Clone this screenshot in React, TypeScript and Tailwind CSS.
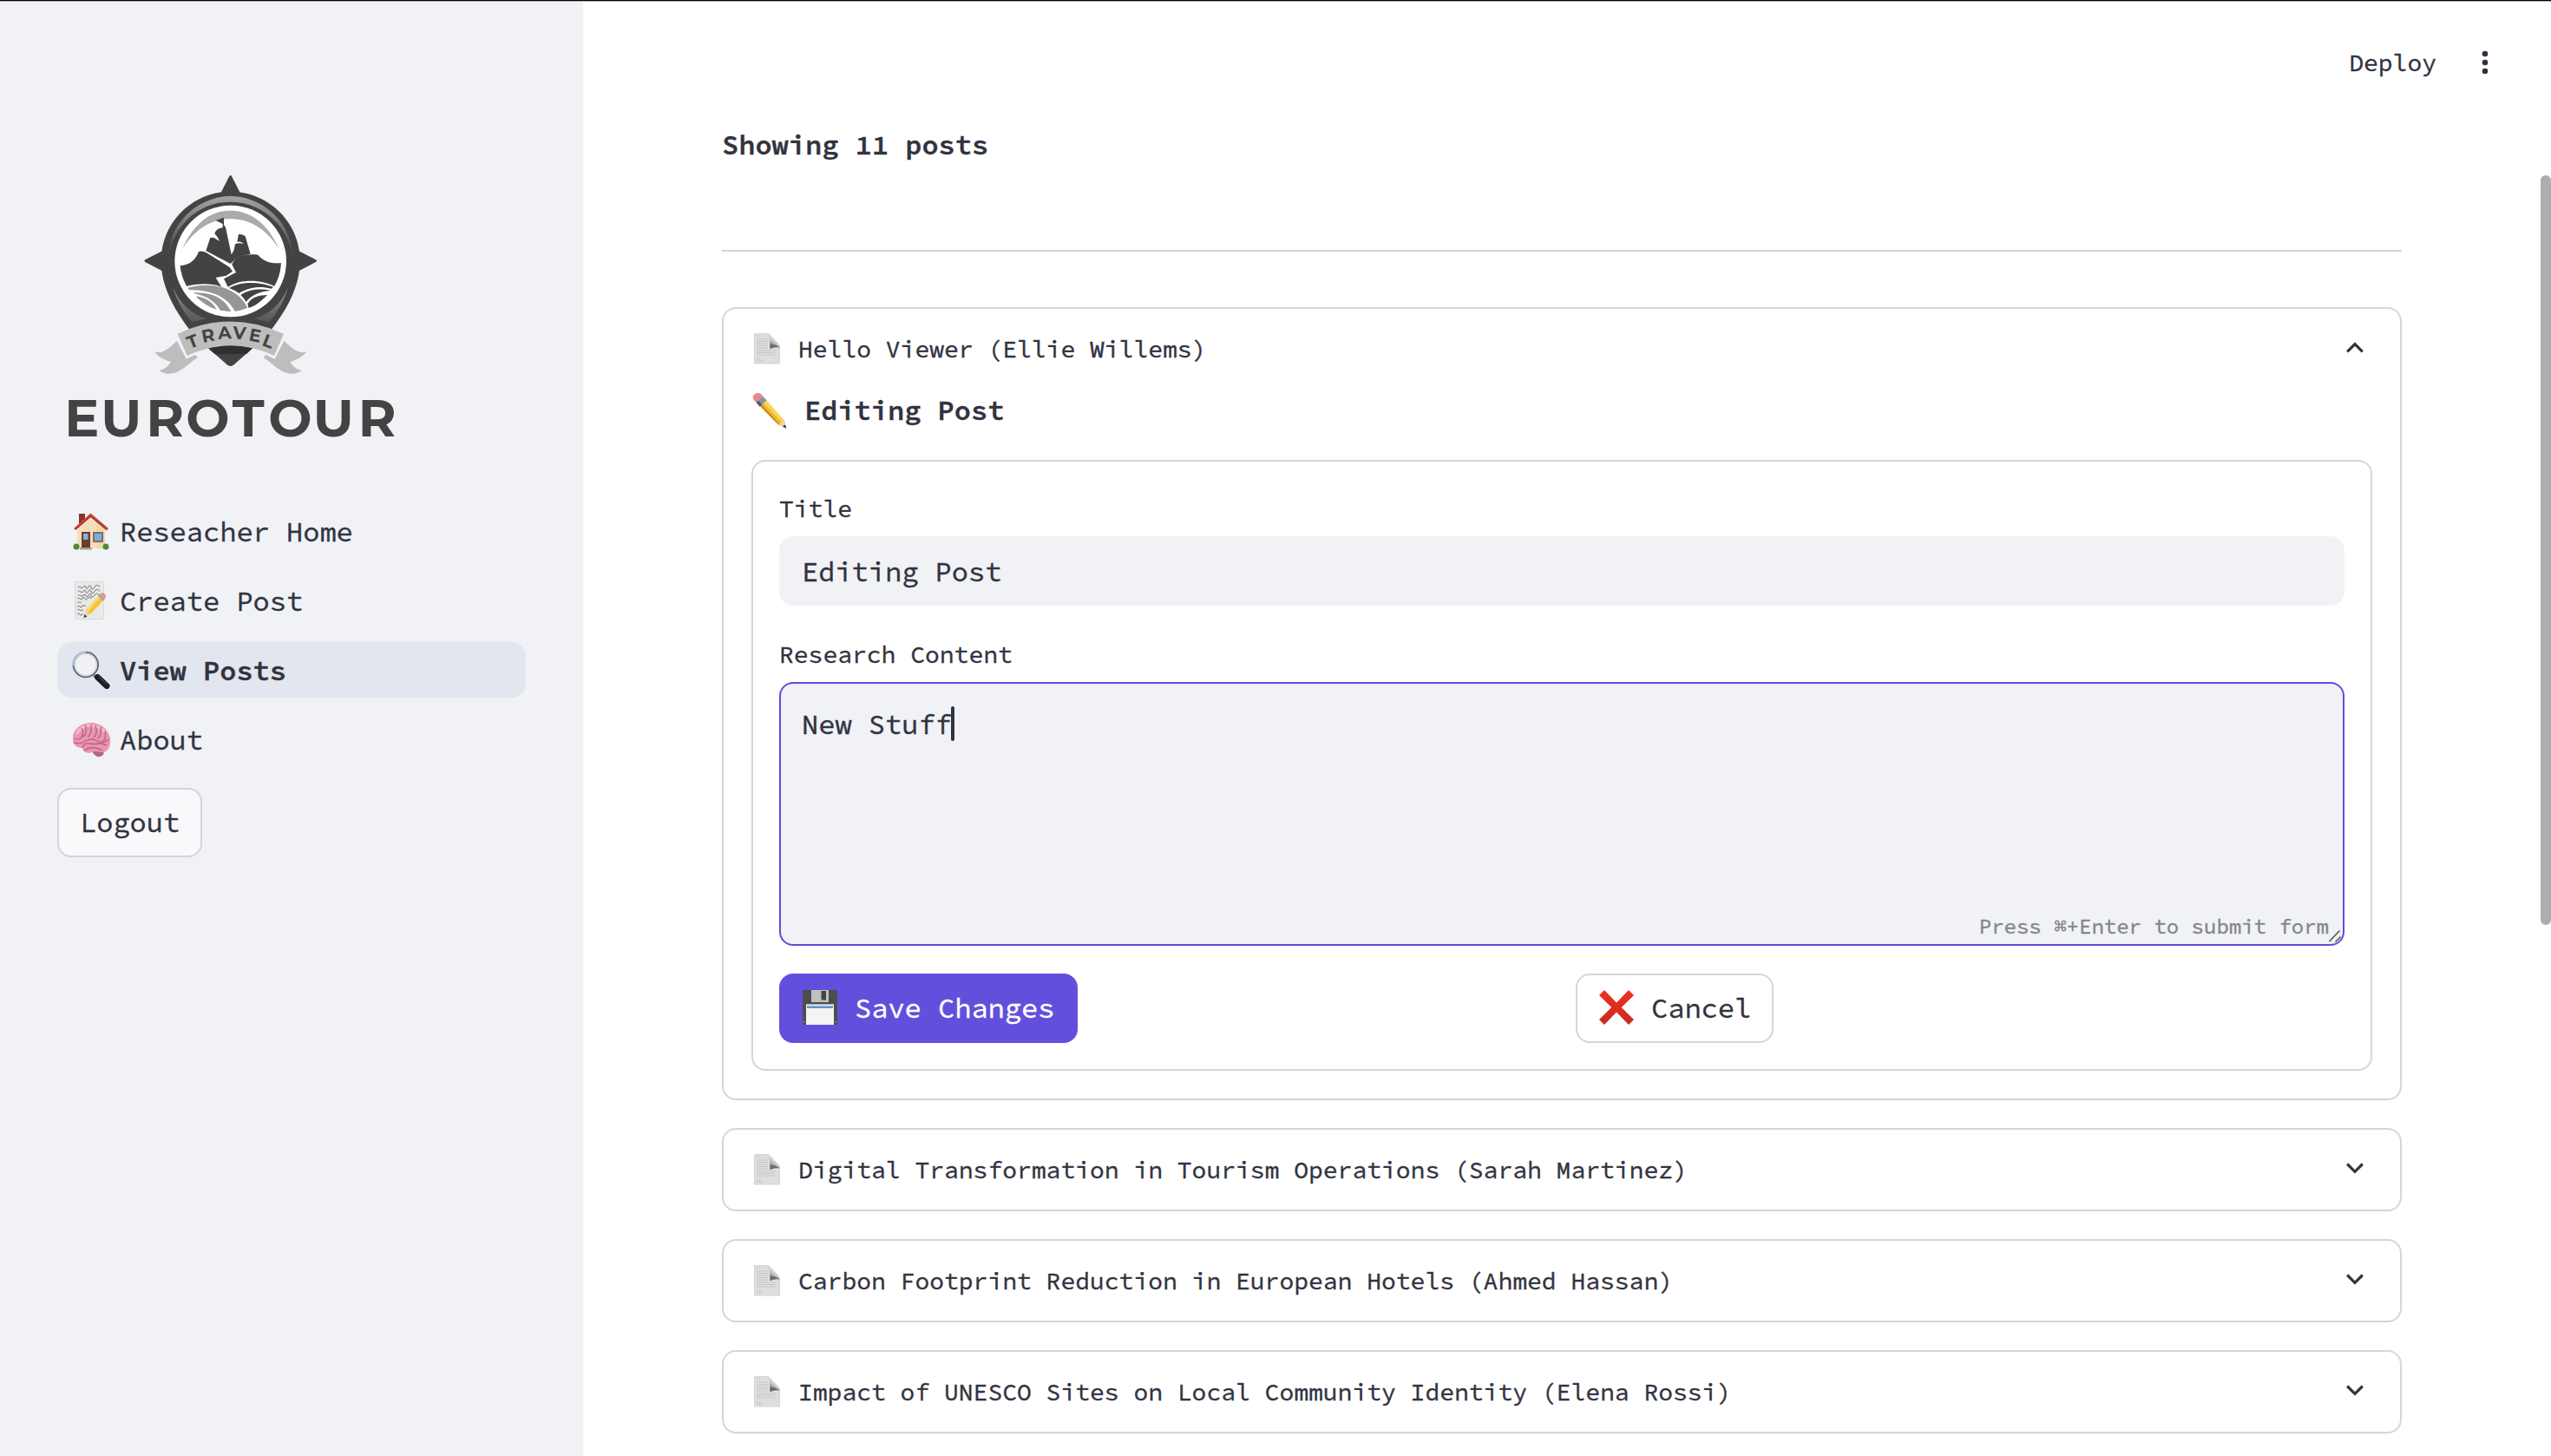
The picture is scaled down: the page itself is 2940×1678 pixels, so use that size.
import type { ReactNode } from 'react';

function Logo() {
  return (
    <svg viewBox="0 0 1260 1050" className="block h-[350px] w-[420px] [-webkit-text-stroke:0px]" aria-label="Eurotour Travel">
      <defs>
        <linearGradient id="rim" x1="0" y1="140" x2="0" y2="345" gradientUnits="userSpaceOnUse">
          <stop offset="0" stopColor="#a2a2a2" />
          <stop offset="1" stopColor="#434343" />
        </linearGradient>
        <linearGradient id="glow" x1="0" y1="455" x2="0" y2="572" gradientUnits="userSpaceOnUse">
          <stop offset="0" stopColor="#909090" />
          <stop offset="1" stopColor="#565656" />
        </linearGradient>
        <clipPath id="lens">
          <circle cx="617" cy="362" r="175" />
        </clipPath>
      </defs>
      {/* compass pin */}
      <g fill="#434343">
        <path d="M377 362C377 225 490 122 617 122S857 225 857 362C857 450 812 528 760 597L692 665L629 721Q617 731 605 721L542 665L473 597C422 528 377 450 377 362Z" />
        <path d="M613 69Q617 63 621 69L654 134H580Z" />
        <path d="M322 366Q316 362 322 358L384 326V398Z" />
        <path d="M912 366Q918 362 912 358L850 326V398Z" />
      </g>
      <path d="M540 664C580 652 652 652 693 664L672 684H562Z" fill="#2f2f2f" />
      <path d="M402 345C408 215 520 138 617 138S826 215 832 345C808 225 715 158 617 158S426 225 402 345Z" fill="url(#rim)" />
      <path d="M418 455C445 512 480 545 535 562L484 574C455 540 432 500 418 455Z" fill="url(#glow)" />
      <path d="M816 455C789 512 754 545 699 562L750 574C779 540 802 500 816 455Z" fill="url(#glow)" />
      <circle cx="617" cy="363" r="193" fill="#fff" />
      <path d="M450 320C490 235 545 188 617 188S745 235 785 320C735 245 680 217 617 217S500 245 450 320Z" fill="#ababab" />
      {/* landscape */}
      <g clipPath="url(#lens)">
        <path d="M430 377C470 382 495 362 507 330Q520 326 534 334L614 384L624 398L602 413L566 420L586 452Q530 432 458 452L430 440Z" fill="#434343" />
        <path d="M532 327L547 282Q560 279 568 287L579 294Q575 280 562 268Q566 250 590 247V234L566 222L594 212V238L600 246L620 340L628 327L633 304Q647 298 662 303Q654 294 640 296L645 270Q657 268 668 277L686 338Q640 344 617 372Z" fill="#434343" />
        <path d="M622 374C632 346 670 336 712 341C730 364 760 374 800 368V450H770C730 430 660 420 608 452L594 424L636 402Z" fill="#434343" />
        <path d="M458 458C545 430 640 450 676 524L634 540C610 490 560 460 458 462Z" fill="#969696" />
        <path d="M490 472C560 470 600 495 620 540L582 534C565 500 530 482 490 474Z" fill="#969696" />
        <path d="M500 484C535 490 558 508 570 532C545 524 520 505 500 488Z" fill="#969696" />
        <path d="M612 456C660 430 720 436 765 452L758 458C720 448 680 452 646 474Q630 462 612 456Z" fill="#434343" />
        <path d="M652 480C690 455 725 460 756 464C715 468 690 480 670 504Q664 490 652 480Z" fill="#434343" />
        <path d="M676 510C690 488 715 480 745 480L700 520L680 526Z" fill="#434343" />
      </g>
      {/* ribbon */}
      {['', 'translate(1234 0) scale(-1 1)'].map((flip) => (
        <path
          key={flip}
          transform={flip || undefined}
          d="M432 639L464 701L495 687L503 697C470 715 447 752 405 752Q383 752 370 741Q394 738 411 711C385 704 362 690 355 676C385 684 400 666 432 639Z"
          fill="#bdbdbd"
        />
      ))}
      <path d="M434 614Q617 529 801 614L768 690Q617 620 467 690Z" fill="#bdbdbd" />
      <g fill="#434343" fontFamily="Montserrat, Lato, sans-serif" fontWeight="700" textAnchor="middle" fontSize="61">
        <text transform="translate(493 660) rotate(-21)">T</text>
        <text transform="translate(543 641) rotate(-11)">R</text>
        <text transform="translate(598 632) rotate(-3)">A</text>
        <text transform="translate(647 632) rotate(4)">V</text>
        <text transform="translate(698 641) rotate(11)">E</text>
        <text transform="translate(740 660) rotate(21)">L</text>
      </g>
      <text
        x="43 169 325 463 623 748 902 1058"
        y="970"
        fill="#434343"
        fontFamily="Montserrat, Lato, sans-serif"
        fontWeight="700"
        fontSize="179"
      >
        EUROTOUR
      </text>
    </svg>
  );
}

function House() {
  return (
    <svg viewBox="0 0 44 44" className="size-11">
      <path d="M8 2h7v12H8z" fill="#8e3229" />
      <path d="M6 18L22 4l16 14v24H6z" fill="#f2dfba" />
      <path d="M28 12l10 8v22H28z" fill="#ead2a6" opacity=".6" />
      <path d="M2 19L21.500 1.500L42 19l-2 2.500L21.500 6L4 21z" fill="#c9463a" />
      <path d="M4 20L21.500 5L40 20.500" fill="none" stroke="#7e2a22" strokeWidth="1" />
      <path d="M11 23h10v20H11z" fill="#6e3b29" />
      <path d="M13 25h5.500v7H13z" fill="#7db4ea" />
      <path d="M24 23h12v12H24z" fill="#8a6a52" />
      <path d="M26 25h8v8h-8z" fill="#76aee6" />
      <path d="M9 41h14v2.500H9z" fill="#a3a09d" />
      <circle cx="5" cy="40" r="3.500" fill="#4f8a35" />
      <circle cx="39" cy="40" r="3.500" fill="#4f8a35" />
    </svg>
  );
}

function Memo() {
  return (
    <svg viewBox="0 0 44 44" className="size-11">
      <path d="M3.500.5h33v43h-33z" fill="#e9e9e7" stroke="#d9d9d8" />
      <path
        d="M7 7q2-2 3 0t3-.5 3 .5 3-.5 3 .5 4-.5 6 0M7 12q2-2 3 0t3-.5 3 .5 3-.5 3 .5 4-.5 6 0M7 16.500q2-1.500 3 0t3-.5 3 .5 3-.5 3 .5 4-.5 5 0M6 20q2-1.500 3 0t3-.5 3 .5 3-.5 4 .5M6 24.500q2-1 5 0M6 29q2-1.500 3 0t3-.5 4 .5M6 33q2-1.500 3 0t4-.5M6 38q2-2 3 0t4-.5"
        fill="none"
        stroke="#8d8d8d"
        strokeWidth="1.100"
      />
      <path d="M14 41l2-8L31 16l6 5L21 38z" fill="#f3c23a" />
      <path d="M16 33L31 16l2 1.700L18.500 35z" fill="#fadb6e" />
      <path d="M14 41.500l2-8.500 5 5z" fill="#efd7a8" />
      <path d="M13.500 42l1-4 2.800 2.800z" fill="#33302e" />
      <path d="M30 17l2-2.500 6 5.500-2 2.500z" fill="#98a7b5" />
      <path d="M32 14.500q2.500-2.500 5.500 0t.5 5.500z" fill="#ef8f92" />
    </svg>
  );
}

function Magnifier() {
  return (
    <svg viewBox="0 0 44 44" className="size-11">
      <path d="M25 28l3 3" stroke="#777" strokeWidth="3" />
      <path d="M29.500 30.500L40 40.500" stroke="#1c1e20" strokeWidth="7" strokeLinecap="round" />
      <path d="M30 28.500l10 10" stroke="#5b5f62" strokeWidth="1" />
      <circle cx="15.800" cy="16" r="14.300" fill="#eff1f2" stroke="#5f666c" strokeWidth="1.800" />
      <path d="M2 17A14 14 0 0 1 16 1.500" fill="none" stroke="#a4c8ee" strokeWidth="2" />
      <circle cx="15.800" cy="16" r="12.600" fill="none" stroke="#c3c8cb" strokeWidth="1" />
    </svg>
  );
}

function Brain() {
  return (
    <svg viewBox="0 0 44 44" className="size-11">
      <g transform="translate(0 2)">
        <path d="M23 34q4 7 9 6t5-7l-6-4z" fill="#b4667a" />
        <path d="M1 20C0 10 9 2 20 1S43 8 44 20c.5 8-2 15-9 15-5 0-8-2-12 0-6 2-11-1-11-5C5 30 1 26 1 20Z" fill="#e995b1" />
        <path d="M5 14Q12 3 22 4t16 8" fill="none" stroke="#f7bccd" strokeWidth="3" />
        <path
          d="M3 19q5 3 8-2t0-10M11 17q4 0 5-5t-1-9M18 17q5-2 4-14M25 18q5-4 2-14M30 19q5-5 3-13M35 23q5-4 3-12M2 24q8 2 14-2t13 0 13-2M12 30q1-6 8-5t10 0 10 2M14 33q5-4 12-3t9 3"
          fill="none"
          stroke="#bf6483"
          strokeWidth="1.400"
        />
      </g>
    </svg>
  );
}

function Page() {
  return (
    <svg viewBox="0 0 30 36" className="mr-[5px] ml-[3px] h-9 w-[30px]">
      <defs>
        <linearGradient id="curl" x1="18" y1="15" x2="26" y2="5" gradientUnits="userSpaceOnUse">
          <stop offset="0" stopColor="#6e6e6e" />
          <stop offset=".55" stopColor="#c9c9c9" />
          <stop offset="1" stopColor="#f4f4f4" />
        </linearGradient>
      </defs>
      <path d="M.5.5H17L29.500 14V35H.5z" fill="#dedede" stroke="#cecece" strokeWidth=".8" />
      <path d="M3 3h5M3 7h13M3 9.500h13M3 12h13M3 14.500h13M3 17h13M3 20h23M3 22.500h21M3 25h22M3 30h5M3 32h7" stroke="#c2c2c2" strokeWidth=".8" />
      <path d="M14 .5q4 0 4.500 8v9.500q5-2.500 11-1.500Q29 11 17 .5z" fill="url(#curl)" />
      <path d="M14 .5q4.500 1 5 12.500 5-1 10.500 3.500Q24 15 18.500 18V9Q18 1.500 14 .5Z" fill="#6c6c6c" />
    </svg>
  );
}

function Pencil() {
  return (
    <svg viewBox="0 0 41 41" className="h-[41px] w-[41px]">
      <path d="M8.500 13.500L16 7l22 25 1.500 7.500L31.500 37z" fill="#f0b92e" />
      <path d="M12.500 10L16 7l22 25-2.500 2z" fill="#f9d65c" />
      <path d="M8.500 13.500l2-1.700L33.500 37l-2 0z" fill="#cf8a1d" />
      <path d="M31 36.500l7-5.500 2 9z" fill="#eed3a0" />
      <path d="M36 38.500l3-2 1.200 4.200z" fill="#2b2a29" />
      <path d="M5 10l8-6.500 4.500 5-8 7z" fill="#7f95a8" />
      <path d="M5 10l2.500-2 4.500 5.500-2.500 2z" fill="#4d5966" />
      <path d="M2.800 8Q0 3.500 4 1t7.500.5L13.500 4 5.500 11z" fill="#e8898b" />
    </svg>
  );
}

function Floppy() {
  return (
    <svg viewBox="0 0 42 42" className="size-[42px]">
      <path d="M1 1h38q2 0 2 2v38H1z" fill="#4d4d4d" />
      <path d="M11 1h20v14H11z" fill="#bfc0c2" />
      <path d="M22.500 2h5.500v10.500h-5.500z" fill="#444" />
      <path d="M5 17.500h32V41H5z" fill="#f4f4f5" />
      <path d="M5 17.500h32V19H5z" fill="#dcdcdc" />
      <path d="M6 19.500h30v2.500H6z" fill="#5f93cb" />
      <path d="M1.500 36.500h2v2h-2zM38 36.500h2v2h-2z" fill="#8074e0" />
    </svg>
  );
}

function Cross() {
  return (
    <svg viewBox="0 0 42 42" className="size-[42px]">
      <defs>
        <linearGradient id="red" x1="0" y1="0" x2="0" y2="1">
          <stop offset="0" stopColor="#ea3323" />
          <stop offset="1" stopColor="#cb2a20" />
        </linearGradient>
      </defs>
      <path d="M7 1l14 14.500L35 1l6 6-14.200 14L41 35l-6 6-14-14.500L7 41l-6-6 14.200-14L1 7z" fill="url(#red)" />
    </svg>
  );
}

function Chevron({ up = false }: { up?: boolean }) {
  return (
    <svg viewBox="0 0 20 13" className="mr-[10px] mb-1 h-[13px] w-5" fill="none" stroke="#31333f" strokeWidth="3.200">
      {up ? <path d="M1.200 11.300L10 2.500l8.800 8.800" /> : <path d="M1.200 1.500L10 10.300l8.800-8.800" />}
    </svg>
  );
}

function NavItem({ icon, label, active = false }: { icon: ReactNode; label: string; active?: boolean }) {
  return (
    <a
      className={
        active
          ? 'flex h-16 items-center gap-[11px] rounded-2xl bg-[#e2e6ee] pl-[17px] font-semibold'
          : 'flex h-16 items-center gap-[11px] rounded-2xl pl-[17px]'
      }
    >
      <span className="-mt-px">{icon}</span>
      <span className="pt-0.5">{label}</span>
    </a>
  );
}

function Summary({ title, open = false }: { title: string; open?: boolean }) {
  return (
    <div className="flex h-[92px] items-center justify-between px-8 text-[28px] leading-[48px]">
      <div className="flex items-center gap-[16px]">
        <Page />
        <span>{title}</span>
      </div>
      <Chevron up={open} />
    </div>
  );
}

const posts = [
  'Digital Transformation in Tourism Operations (Sarah Martinez)',
  'Carbon Footprint Reduction in European Hotels (Ahmed Hassan)',
  'Impact of UNESCO Sites on Local Community Identity (Elena Rossi)',
];

export default function App() {
  return (
    <div className="relative flex h-[1678px] w-[2940px] overflow-hidden bg-white font-['Source_Code_Pro','Liberation_Mono',monospace] text-[32px] text-[#31333f] [-webkit-text-stroke:0.35px]">
      <div className="absolute inset-x-0 top-0 h-0.5 border-b border-[#b0b0b0] bg-black" />

      <aside className="w-[672px] shrink-0 bg-[#f0f2f6] pt-[180px]">
        <div className="pl-[60px]">
          <Logo />
        </div>
        <nav className="mt-[50px] flex flex-col gap-4 px-[66px]">
          <NavItem icon={<House />} label="Reseacher Home" />
          <NavItem icon={<Memo />} label="Create Post" />
          <NavItem icon={<Magnifier />} label="View Posts" active />
          <NavItem icon={<Brain />} label="About" />
        </nav>
        <button className="mt-6 ml-[66px] flex h-20 items-center rounded-2xl border-2 border-[#d2d4d9] bg-[#f9f9fb] px-6">
          Logout
        </button>
      </aside>

      <main className="flex grow flex-col">
        <header className="flex h-[142px] justify-end gap-[49px] pt-12 pr-[69px] text-[28px] leading-[48px]">
          <span>Deploy</span>
          <svg viewBox="0 0 14 48" className="h-12 w-3.5" fill="#31333f">
            <circle cx="7" cy="14" r="3.300" />
            <circle cx="7" cy="24" r="3.300" />
            <circle cx="7" cy="34" r="3.300" />
          </svg>
        </header>

        <div className="ml-40 w-[1936px]">
          <h2 className="h-[50px] leading-[51px] font-semibold">Showing 11 posts</h2>
          <hr className="mt-24 mb-16 border-t-2 border-[#d6d6d8]" />

          <div className="flex flex-col gap-8">
            <section className="rounded-2xl border-2 border-[#d6d6d8] pb-8">
              <Summary title="Hello Viewer (Ellie Willems)" open />
              <div className="px-8">
                <h3 className="flex h-[82px] gap-5 leading-[50px] font-semibold">
                  <span className="mt-[5px]">
                    <Pencil />
                  </span>
                  <span>Editing Post</span>
                </h3>
                <form className="rounded-2xl border-2 border-[#d6d6d8] p-[30px]">
                  <label className="block text-[28px] leading-[48px]">Title</label>
                  <div className="mt-2 flex h-20 items-center rounded-2xl bg-[#f0f2f6] px-[26px] pt-0.5">Editing Post</div>
                  <label className="mt-8 block text-[28px] leading-[48px]">Research Content</label>
                  <div className="relative mt-2 flex h-[304px] items-start rounded-2xl border-2 border-[#604cdc] bg-[#f0f2f6] px-6 pt-[25px] leading-[45px]">
                    <span>New Stuff</span>
                    <span className="mt-px -ml-px h-10 w-1 rounded-sm bg-[#31333f]" />
                    <span className="absolute right-4 bottom-2 text-[24px] leading-6 text-[#83848c]">
                      Press ⌘+Enter to submit form
                    </span>
                    <svg
                      viewBox="0 0 14 14"
                      className="absolute right-0.5 bottom-0.5 size-3.5"
                      stroke="#5c5c5c"
                      strokeWidth="1.600"
                    >
                      <path d="M.5 13L12.500.5M7.500 13.500L13.500 7.500" />
                    </svg>
                  </div>
                  <div className="mt-8 grid grid-cols-2 gap-8">
                    <div className="flex">
                      <button
                        type="button"
                        className="flex h-20 items-center gap-[19px] rounded-2xl bg-[#6250dc] pr-[27px] pl-[26px] text-white"
                      >
                        <span className="-mt-0.5">
                          <Floppy />
                        </span>
                        Save Changes
                      </button>
                    </div>
                    <div className="flex">
                      <button
                        type="button"
                        className="flex h-20 items-center gap-[19px] rounded-2xl border-2 border-[#d6d6d8] bg-white px-6"
                      >
                        <span className="-mt-0.5">
                          <Cross />
                        </span>
                        Cancel
                      </button>
                    </div>
                  </div>
                </form>
              </div>
            </section>
            {posts.map((title) => (
              <section key={title} className="rounded-2xl border-2 border-[#d6d6d8]">
                <Summary title={title} />
              </section>
            ))}
          </div>
        </div>
      </main>

      <div className="absolute top-[202px] right-0 h-[864px] w-3 rounded-full bg-[#adadb2]" />
    </div>
  );
}
